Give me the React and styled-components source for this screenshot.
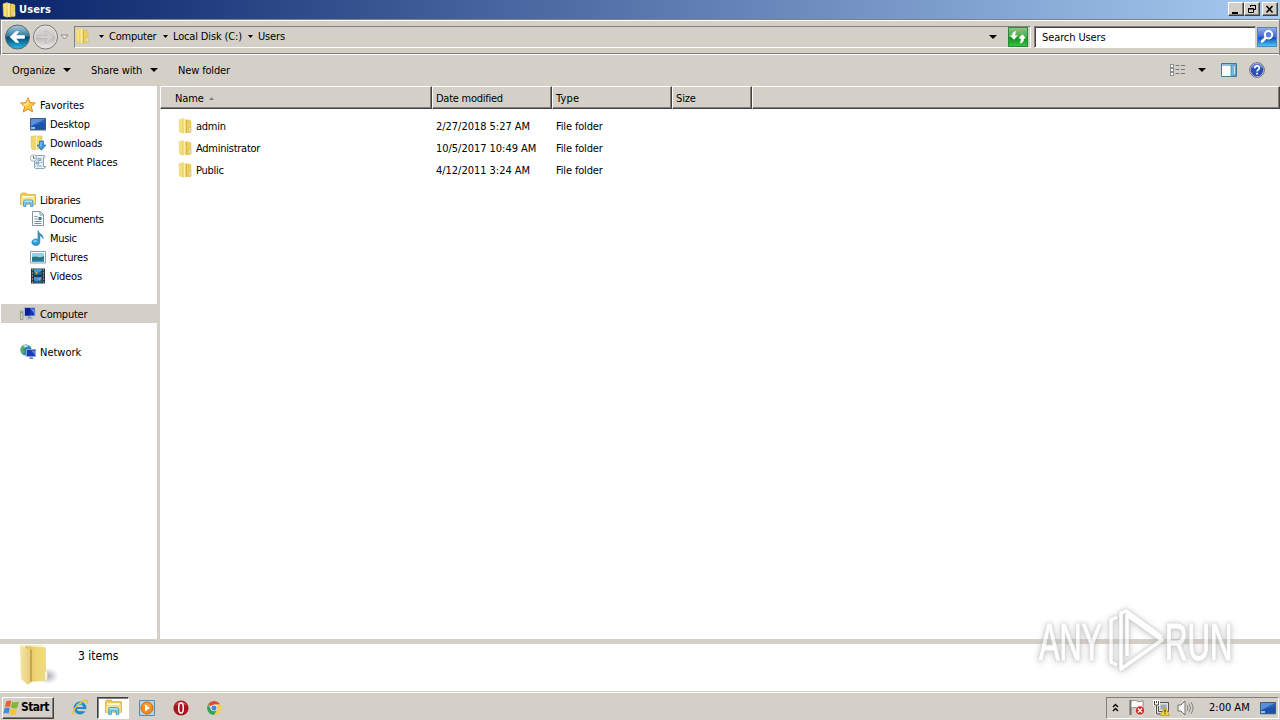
import React from "react";
import styled, { createGlobalStyle, css } from "styled-components";

const face = "#d4d0c8";

const Global = createGlobalStyle`
  * { box-sizing: border-box; }
  html, body { margin: 0; padding: 0; overflow: hidden; }
  body {
    background: #fff;
    color: #000;
    font: 11px/13px "DejaVu Sans Condensed", "DejaVu Sans", sans-serif;
    font-stretch: condensed;
  }
  svg { display: block; flex: none; }
`;

const Screen = styled.div`
  position: relative;
  width: 1280px;
  height: 720px;
  display: flex;
  flex-direction: column;
  overflow: hidden;
`;

const Label = styled.span`
  white-space: pre;
  letter-spacing: ${(p) => p.$track ?? -0.15}px;
  font-weight: ${(p) => (p.$bold ? 700 : 400)};
`;

/* ---------- window frame ---------- */
const TitleBar = styled.header`
  display: flex;
  align-items: center;
  height: 19px;
  flex: none;
  padding: 0 2px 0 1px;
  color: #fff;
  background: linear-gradient(90deg, #0a246a, #a6caf0);
`;

const TitleText = styled(Label)`
  flex: 1;
  margin: -1px 0 0 2px;
`;

const WindowButton = styled.button`
  width: 16px;
  height: 14px;
  padding: 0;
  margin: -1px 0 0 ${(p) => (p.$gap ? 2 : 0)}px;
  display: flex;
  align-items: center;
  justify-content: center;
  background: ${face};
  border: 1px solid;
  border-color: #fff #404040 #404040 #fff;
  box-shadow: inset -1px -1px #808080;
`;

const NavBar = styled.nav`
  display: flex;
  align-items: center;
  height: 36px;
  flex: none;
  padding: 0 0 1px 3px;
  background: ${face};
  border: 1px solid #808080;
  border-bottom: 0;
  box-shadow: inset 1px 1px #fff, inset 0 -1px #fff, inset 0 -2px #808080;
`;

const NavGap = styled.div`
  flex: none;
  width: ${(p) => p.$w}px;
`;

const AddressField = styled.div`
  display: flex;
  align-items: center;
  width: 957px;
  height: 22px;
  margin-left: 5px;
  background: ${face};
  border: 1px solid;
  border-color: #808080 #fff #fff #808080;

  & > svg:first-child {
    margin: -2px 0 0 -1px;
  }
`;

const Crumb = styled.span`
  display: flex;
  align-items: center;
  width: ${(p) => p.$w}px;
  margin-left: ${(p) => p.$before ?? 0}px;
  padding-bottom: 1px;
  gap: 5px;
`;

const Spacer = styled.div`
  flex: 1;
`;

const SearchField = styled.div`
  width: 222px;
  height: 22px;
  margin: 0 1px 0 3px;
  padding: 4px 0 0 7px;
  background: #fff;
  border: 1px solid;
  border-color: #808080 #d4d0c8 #fff #808080;
  box-shadow: inset 1px 1px #404040;
`;

const CommandBar = styled.div`
  display: flex;
  align-items: center;
  height: 31px;
  flex: none;
  padding: 0 15px 1px 12px;
  background: ${face};
`;

const Command = styled.div`
  display: flex;
  align-items: center;
  gap: ${(p) => p.$gap ?? 8}px;
  width: ${(p) => p.$w}px;
`;

/* ---------- body ---------- */
const Body = styled.main`
  display: flex;
  height: 553px;
  flex: none;
`;

const Sidebar = styled.aside`
  width: 160px;
  flex: none;
  padding: 9px 0 0 1px;
  border-right: 3px solid ${face};
`;

const Branch = styled.section`
  margin-bottom: 19px;
`;

const NavItem = styled.div`
  display: flex;
  align-items: center;
  gap: 4px;
  height: 19px;
  padding-left: ${(p) => (p.$child ? 29 : 19)}px;
  background: ${(p) => (p.$active ? face : "transparent")};

  & > span {
    padding-top: 2px;
  }
`;

const Listing = styled.section`
  flex: 1;
`;

const HeaderRow = styled.div`
  display: flex;
  height: 23px;
  background: ${face};
`;

const HeaderCell = styled.div`
  display: flex;
  align-items: center;
  gap: 5px;
  width: ${(p) => p.$w}px;
  padding: 1px 0 0 ${(p) => p.$pad ?? 3}px;
  border: 1px solid;
  border-color: #fff #404040 #404040 #fff;
  box-shadow: inset -1px -1px #808080;
`;

const Rows = styled.div`
  padding: 6px 0 0 17px;
`;

const FileRow = styled.div`
  display: flex;
  align-items: center;
  height: 22px;
`;

const FileCell = styled.div`
  display: flex;
  align-items: center;
  gap: 3px;
  width: ${(p) => p.$w}px;

  & > svg {
    margin-top: -1px;
  }
`;

/* ---------- bottom ---------- */
const DetailsPane = styled.footer`
  display: flex;
  height: 53px;
  flex: none;
  gap: 20px;
  padding-left: 18px;
  border-top: 5px solid ${face};
  border-bottom: 1px solid ${face};
  font-size: 12px;
  line-height: 24px;

  & > svg {
    margin-top: -1px;
  }
`;

const TaskBar = styled.div`
  display: flex;
  align-items: center;
  height: 28px;
  flex: none;
  padding: 2px 1px 0 2px;
  background: ${face};
  border-top: 1px solid #fff;
`;

const raised = css`
  border-color: #fff #404040 #404040 #fff;
  box-shadow: inset -1px -1px #808080;
`;

const pressed = css`
  border-color: #404040 #fff #fff #404040;
  box-shadow: inset 1px 1px #808080;
  background: #fff;
`;

const StartButton = styled.div`
  display: flex;
  align-items: center;
  gap: 1px;
  width: 52px;
  height: 22px;
  padding-left: 0;
  margin-right: 10px;
  border: 1px solid;
  font-size: 12px;
  ${raised}
`;

const TaskButton = styled.div`
  display: flex;
  align-items: center;
  justify-content: center;
  width: 32px;
  height: 22px;
  margin-right: ${(p) => p.$after ?? 1}px;
  border: 1px solid transparent;
  ${(p) => p.$active && pressed}
`;

const Tray = styled.div`
  display: flex;
  align-items: center;
  width: 173px;
  height: 22px;
  padding-left: 5px;
  border: 1px solid;
  border-color: #808080 #fff #fff #808080;
`;

const TrayItem = styled.div`
  width: ${(p) => p.$w}px;
  flex: none;
`;

const Watermark = styled.div`
  position: absolute;
  left: 1030px;
  top: 602px;
  opacity: 0.72;

  svg {
    overflow: visible;
  }
`;

const WatermarkShapes = styled.g`
  filter: drop-shadow(0 0 1.5px #b4b4b4) drop-shadow(0 1px 3px #b4b4b4);
`;

/* ---------- drawings ---------- */
const Arrow = ({ w = 5, fill = "#000", up }) => (
  <svg width={w} height={Math.ceil(w / 2)} viewBox="0 0 10 5" preserveAspectRatio="none">
    <path d={up ? "M0 5h10L5 0z" : "M0 0h10L5 5z"} fill={fill} />
  </svg>
);

const Folder = ({ size = 16 }) => (
  <svg width={size} height={size} viewBox="0 0 16 16">
    <path d="M2 1.8 6.5.5v14.7L2.5 14z" fill="#f5e07e" stroke="#e3cb6b" strokeWidth=".5" />
    <path d="M7.5 2h4.8l1.7 1v11.2L8 15z" fill="#edcf5c" stroke="#d9b94d" strokeWidth=".5" />
    <path d="M6 1.8 9 .8v13.7l-2.5.7z" fill="#fbefa0" />
    <path d="M6 2v13" stroke="#dcba50" strokeWidth=".6" />
    <path d="M9.2 1.5v13" stroke="#c69d2c" strokeWidth=".8" />
    <path d="M12 9.5h2v4.5h-2z" fill="#f3e8ae" stroke="#bcae70" strokeWidth=".4" />
  </svg>
);

const BigFolder = () => (
  <svg width="40" height="46" viewBox="0 0 40 46">
    <defs>
      <linearGradient id="flap">
        <stop stopColor="#f5e5a0" />
        <stop offset="1" stopColor="#e8cf80" />
      </linearGradient>
      <linearGradient id="back">
        <stop stopColor="#e0bb5c" />
        <stop offset=".5" stopColor="#efd374" />
        <stop offset="1" stopColor="#f0dc80" />
      </linearGradient>
      <radialGradient id="shade">
        <stop stopColor="#7f8a92" stopOpacity=".7" />
        <stop offset="1" stopColor="#8d949c" stopOpacity="0" />
      </radialGradient>
    </defs>
    <ellipse cx="30" cy="33" rx="10" ry="8" fill="url(#shade)" />
    <path d="m7 3 20 1 1 2v30l-2 2-14 1z" fill="url(#back)" />
    <path d="m2 2 10 5v33l-2 2-7-6z" fill="url(#flap)" />
    <path d="m12 7 2-1v32l-2 2z" fill="#c9a54b" />
    <path d="m26.5 27 3 2v7l-3 2z" fill="#fff6d8" stroke="#cfc08a" strokeWidth=".5" />
    <path d="M3 2.5h22" stroke="#faeec0" />
  </svg>
);

const BackIcon = () => (
  <svg width="27" height="26" viewBox="0 0 26 26">
    <defs>
      <linearGradient id="backblue" x2="0" y2="1">
        <stop stopColor="#a9cbd9" />
        <stop offset=".45" stopColor="#367e9f" />
        <stop offset=".52" stopColor="#064a75" />
        <stop offset="1" stopColor="#27bdee" />
      </linearGradient>
    </defs>
    <circle cx="13" cy="13" r="12" fill="url(#backblue)" stroke="#56666e" />
    <path d="M5.5 13 11.500 7.500h2.700L11.500 11.600H20v2.800h-8.500l2.700 4.100h-2.700z" fill="#fff" stroke="#fff" strokeWidth=".6" />
  </svg>
);

const ForwardIcon = () => (
  <svg width="27" height="26" viewBox="0 0 27 26">
    <defs>
      <linearGradient id="fwd" x2="0" y2="1">
        <stop stopColor="#dedcd9" />
        <stop offset=".5" stopColor="#cbc9c6" />
        <stop offset=".55" stopColor="#bebcba" />
        <stop offset="1" stopColor="#efeeec" />
      </linearGradient>
    </defs>
    <circle cx="13.5" cy="13" r="12" fill="url(#fwd)" stroke="#77777a" />
    <circle cx="13.5" cy="13" r="10.8" fill="none" stroke="#e6e4e1" />
    <path d="m21 13-6-6h-3l3.6 4.5H6v3h9.6L12 19h3z" fill="#d3d1ce" stroke="#b3b1ae" strokeWidth=".6" />
  </svg>
);

const RefreshIcon = () => (
  <svg width="20" height="20" viewBox="0 0 20 20">
    <defs>
      <linearGradient id="green" x2="0" y2="1">
        <stop stopColor="#8cc98a" />
        <stop offset=".48" stopColor="#4ba94b" />
        <stop offset=".54" stopColor="#128e22" />
        <stop offset="1" stopColor="#3bc63b" />
      </linearGradient>
    </defs>
    <rect x=".5" y=".5" width="19" height="19" fill="url(#green)" stroke="#2a8a37" />
    <path d="M8.5 4C5 4.500 4 6.200 4.200 8.500H1.800l4.200 4.300L9.800 8.500H7.400C7 6.800 7.500 5.300 8.500 4zM11.500 16.500c3.500-.5 4.700-2.500 4.400-5h2.300L14.300 7.200 10.400 11.500h2.300c.3 2-.1 3.700-1.200 5z" fill="#fff" />
  </svg>
);

const SearchIcon = () => (
  <svg width="20" height="20" viewBox="0 0 20 20">
    <defs>
      <linearGradient id="srch" x2="0" y2="1">
        <stop stopColor="#9aaff0" />
        <stop offset=".48" stopColor="#4468d6" />
        <stop offset=".55" stopColor="#164bc0" />
        <stop offset="1" stopColor="#4ad0f6" />
      </linearGradient>
    </defs>
    <rect x=".5" y=".5" width="19" height="19" fill="url(#srch)" stroke="#5383c7" />
    <circle cx="11.5" cy="7.8" r="3.7" fill="#5c7fe0" stroke="#fff" strokeWidth="2" />
    <path d="m8.5 11-3.5 3.5" stroke="#fff" strokeWidth="2.5" strokeLinecap="round" />
  </svg>
);

const ViewIcon = () => (
  <svg width="16" height="14" viewBox="0 0 16 14">
    {[1.5, 5.5, 9.5].map((y) => (
      <g key={y} fill="none">
        <rect x=".5" y={y} width="3" height="3" fill="#fff" stroke="#8a8d92" />
        <path d={`M5.5 ${y + 1}h4M11 ${y + 1}h4`} stroke="#74777f" />
      </g>
    ))}
  </svg>
);

const PreviewIcon = () => (
  <svg width="16" height="14" viewBox="0 0 16 14">
    <path d="M.5.5h15v13H.5z" fill="#fff" stroke="#45799a" />
    <path d="M1 1h14v2H1z" fill="#94c0d8" />
    <path d="M10 2h5v11h-5z" fill="#72bad9" stroke="#3c7d9d" strokeWidth=".7" />
    <path d="M13 3h1v8h-1z" fill="#c3e9f5" />
  </svg>
);

const HelpIcon = () => (
  <svg width="16" height="16" viewBox="0 0 16 16">
    <circle cx="8" cy="8" r="7.4" fill="#c4cbe0" stroke="#6d7384" />
    <circle cx="8" cy="8" r="6.3" fill="#2b4fb4" />
    <path d="M2.5 6a5.8 5.8 0 0 1 11 0c-2-1-7-1-11 0" fill="#6484d2" />
    <path d="M5.8 6.3C5.8 3 10.5 3.3 10.3 6c0 1.8-2.2 1.6-2.2 3.5M8.1 10.8v1.7" stroke="#fff" strokeWidth="1.7" fill="none" />
  </svg>
);

const Star = () => (
  <svg width="16" height="16" viewBox="0 0 16 16">
    <path d="m8 .8 2.1 4.8 5.2.5-4 3.4 1.3 5.4L8 12.2 3.3 15l1.3-5.5-4-3.4 5.3-.5z" fill="#ffc942" stroke="#e68a24" />
    <path d="M8 2.6 6.5 6.4l-3.8.5 3 2.3L8 7z" fill="#ffeb9a" />
  </svg>
);

const Desktop = () => (
  <svg width="16" height="14" viewBox="0 0 16 14">
    <path d="M.5 1.5h15v11H.5z" fill="#2863c0" stroke="#41597e" />
    <path d="M1 2h14L1 9z" fill="#5b8fd9" />
    <path d="M1 10q7-4 14-4v6H1z" fill="#1b53ab" />
    <path d="M1 10h4v2H1z" fill="#8bc7f3" />
    <path d="M0 13.5h16" stroke="#a3b9c9" />
  </svg>
);

const Downloads = () => (
  <svg width="16" height="16" viewBox="0 0 16 16">
    <path d="M1 1.5 6 .7v14.2L1.5 14zM7 1h5v13H7z" fill="#f0d772" stroke="#d9bd5b" strokeWidth=".6" />
    <path d="M6.5 1.5v13" stroke="#fff5b5" strokeWidth="1.5" />
    <path d="M9.5 6h4v4H16l-4.5 5.3L7 10h2.5z" fill="#3c96d9" stroke="#2270b4" strokeWidth=".7" />
    <path d="M10.5 7h1v5l-2-2h1z" fill="#91d1f3" />
  </svg>
);

const Recent = () => (
  <svg width="16" height="16" viewBox="0 0 16 16">
    <path d="M5 1.5h9.5q1 1 0 2h-1v9h2q0 2-2 2h-8q-2-1 0-2h-1v-9h2" fill="#e7f0f5" stroke="#758e9f" strokeWidth=".8" />
    <path d="M8 4.5h3v2H8zM6 8h3v2H6zM10.5 8.5h2M7 12h5" fill="#b6d4e4" stroke="#7498ae" strokeWidth=".8" />
    <circle cx="3.5" cy="4" r="3.2" fill="#f4f7f8" stroke="#96a3ab" strokeWidth=".8" />
    <path d="M3.5 2v2.3h2" fill="none" stroke="#4a5c68" strokeWidth=".8" />
  </svg>
);

const Libraries = ({ size = 16 }) => (
  <svg width={size} height={size} viewBox="0 0 16 16">
    <path d="M.5 2.5 1.5 1h4.5l1 1.500H15.500V12.500H.5z" fill="#f0ca51" stroke="#cfaa42" strokeWidth=".7" />
    <path d="M2 4h12v2H2z" fill="#fffce3" />
    <path d="M1 5.5h14v7H1z" fill="#f7df84" />
    <path d="M3.5 14.500V10q0-2 2-2h5.500q2 0 2 2v4.500H10.500v-3.200H6v3.200z" fill="#79c9e9" stroke="#4795bd" strokeWidth=".8" />
    <path d="M4.5 9.200h7.500" stroke="#c7effa" />
  </svg>
);

const Documents = () => (
  <svg width="16" height="16" viewBox="0 0 16 16">
    <path d="M2.5.5h8l3 3v11h-11z" fill="#fafcfe" stroke="#8495a4" />
    <path d="M10 1v3h3.5" fill="#d8e3eb" stroke="#8495a4" />
    <path d="M4.5 5.5h3M4.5 8h3M4.5 10.5h7M4.5 12.5h7" stroke="#798c9c" />
    <path d="M8.5 6h3v3h-3z" fill="#3873a6" />
  </svg>
);

const Music = () => (
  <svg width="16" height="16" viewBox="0 0 16 16">
    <path d="M8 .5c.5 3.5 5.5 3.5 5 8-.6-2-2-2.600-3.200-2.700V12A4 3.300 0 1 1 8 9.500z" fill="#2997d6" stroke="#2077b5" strokeWidth=".6" />
    <ellipse cx="5.2" cy="11.3" rx="2" ry="1.3" fill="#75cdf2" />
  </svg>
);

const Pictures = () => (
  <svg width="16" height="14" viewBox="0 0 16 14">
    <path d="M.5 1.5h15v11.500H.5z" fill="#fff" stroke="#8a9fae" />
    <path d="M2 3h12v8.500H2z" fill="#8dd4ef" />
    <path d="M2 7q4-1 6 0 3 1 6-1v5.500H2z" fill="#26766b" />
    <path d="M2 9.500q5 1 12-1v3H2z" fill="#237ba7" />
  </svg>
);

const Videos = () => (
  <svg width="16" height="16" viewBox="0 0 16 16">
    <path d="M1 .5h14v15H1z" fill="#28353c" />
    <path d="M4 1h8v6H4zM4 9h8v6H4z" fill="#3b98cf" />
    <path d="M4 4q4 3 8-2v5H4zM4 12q4 3 8-2v5H4z" fill="#225e88" />
    <path d="m5 3 3 2-2 2zM8 11l3-1-1 3z" fill="#df9a50" />
    {[1, 4, 7, 10, 13].map((y) => (
      <path key={y} d={`M2 ${y + 0.5}h1v1H2zM13 ${y + 0.5}h1v1h-1z`} fill="#d9e3e7" />
    ))}
  </svg>
);

const Computer = () => (
  <svg width="16" height="16" viewBox="0 0 16 16">
    <path d="M.5 5h2.5v8.500H.5z" fill="#c6cac0" stroke="#83907d" strokeWidth=".7" />
    <path d="M1 6.500h1.500" stroke="#6ea568" />
    <path d="M4.500 1.500h10.500v8.500H4.500z" fill="#1932bb" stroke="#a9b8d2" />
    <path d="M5 2h5v7.500H5z" fill="#0b208f" />
    <path d="m10 2 4.500 1v5z" fill="#6388e3" />
    <path d="M8 10.500h3l1 2H7z" fill="#7e91ae" />
    <path d="M6 13h7" stroke="#a9b6c8" />
  </svg>
);

const Network = () => (
  <svg width="16" height="16" viewBox="0 0 16 16">
    <circle cx="6" cy="6" r="5.6" fill="#2c86b4" />
    <path d="M1 4q2-4 6-3.200L5 4 3 5l2 3-2 2Q0 7 1 4z" fill="#5fae4c" />
    <path d="M3 2Q6 0 9 2L5 3.500z" fill="#bde4ec" />
    <path d="M6.500 5.500h9v7h-9z" fill="#1739bb" stroke="#8ba4cf" />
    <path d="m11 6 4 1v4z" fill="#6287de" />
    <path d="M10 13h2.500l1 2H9z" fill="#7690ad" />
  </svg>
);

const WindowsLogo = () => (
  <svg width="17" height="16" viewBox="0 0 17 16">
    <path d="M3.2 1.400Q6-.5 8.300 1.200L7 7.300Q4.700 5.900 1.900 7.300z" fill="#e66537" />
    <path d="M9.2 1.700Q12 3 15.800 1.500L14.300 7.800Q11 9 7.900 7.700z" fill="#80b83b" />
    <path d="M1.700 8.200Q4.500 7 6.800 8.300l-1.300 5.500Q3.200 12.300.2 13.700z" fill="#438bd2" />
    <path d="M7.600 8.700q2.800 1.200 6.500.2l-1.500 5.500Q9 15.500 6.300 14.300z" fill="#f4c33a" />
  </svg>
);

const IE = () => (
  <svg width="17" height="17" viewBox="0 0 17 17">
    <circle cx="8" cy="9" r="4.8" fill="none" stroke="#238acb" strokeWidth="3.2" />
    <path d="M4 9h9.500" stroke="#238acb" strokeWidth="2" />
    <path d="M9.500 10.200h6v2h-6z" fill={face} />
    <path d="M2 15.500C-.8 13 5 5.500 10 2.600c5-3 6.500-1 4.400 2.100" fill="none" stroke="#edbd2d" strokeWidth="1.5" />
    <path d="M4.500 6Q7 3.700 10 5" stroke="#9ad7ef" fill="none" />
  </svg>
);

const MediaPlayer = () => (
  <svg width="16" height="16" viewBox="0 0 16 16">
    <path d="M.5.5h15v15H.5z" fill="#b5d5ea" stroke="#568bb4" />
    <circle cx="8" cy="8" r="6" fill="#f58b1e" stroke="#ce6d0f" />
    <path d="M3.500 6a5 5 0 0 1 9 0z" fill="#fba545" />
    <path d="m6 4.500 5 3.500-5 3.500z" fill="#fff" />
  </svg>
);

const Opera = () => (
  <svg width="16" height="16" viewBox="0 0 16 16">
    <circle cx="8" cy="8" r="7.6" fill="#a81520" />
    <path d="M2 5Q8-2 14 5q-6-2-12 0" fill="#d0625f" />
    <ellipse cx="8" cy="8" rx="2.3" ry="5" fill="#a01420" stroke="#fff" strokeWidth="1.5" />
  </svg>
);

const Chrome = () => (
  <svg width="14" height="14" viewBox="0 0 16 16">
    <path d="M8 8 1.200 4A8 8 0 0 1 15 4H8z" fill="#dd4b3c" />
    <path d="M8 8V4h7A8 8 0 0 1 8 16l3.500-6z" fill="#f8cf45" />
    <path d="M8 8 11.500 10 8 16A8 8 0 0 1 1.200 4l3.400 6z" fill="#31a15b" />
    <circle cx="8" cy="8" r="3.8" fill="#f4f4f4" />
    <circle cx="8" cy="8" r="2.9" fill="#4585dc" />
  </svg>
);

const Flag = () => (
  <svg width="18" height="17" viewBox="0 0 18 17">
    <path d="M2.500 1v15" stroke="#6d6d6d" strokeWidth="2" />
    <path d="M3 2q4-1.500 6 0 3 2 6-.5V9q-4 2-6 0Q6 8 3 9z" fill="#fff" stroke="#777" strokeWidth=".8" />
    <circle cx="12" cy="11.500" r="4.600" fill="#d22c27" stroke="#fff" strokeWidth=".6" />
    <path d="m10 9.500 4 4m0-4-4 4" stroke="#fff" strokeWidth="1.400" />
  </svg>
);

const NetStatus = () => (
  <svg width="17" height="16" viewBox="0 0 17 16">
    <path d="M5.500 2.500h10v9h-10z" fill="#d5d8da" stroke="#555" />
    <path d="M7 4h7v6H7z" fill="#a4abb0" stroke="#f3f3f3" strokeWidth=".6" />
    <path d="M1 .5h5v4.500H1zM3.500 4v11" fill="#fff" stroke="#fff" strokeWidth="2" />
    <path d="M1.500 1v4h4V1M3.500 1v2M3.500 5v9h4" fill="none" stroke="#4a4a4a" />
    <path d="m12 7 4.500 8.500h-9z" fill="#f6da39" stroke="#b99413" strokeWidth=".7" />
    <path d="M12 9.500v3M12 13.200v1" stroke="#222" strokeWidth="1.1" />
  </svg>
);

const Speaker = () => (
  <svg width="17" height="16" viewBox="0 0 17 16">
    <path d="M1 5h3l4-4v14l-4-4H1z" fill="#f5f5f5" stroke="#727272" />
    <path d="M10 5q2 3 0 6M12 3.500q3 4.500 0 9M14 2q4 6 0 12" fill="none" stroke="#858585" />
  </svg>
);

const Chevrons = () => (
  <svg width="7" height="9" viewBox="0 0 7 9">
    <path d="m1 4 2.500-2.500L6 4M1 8l2.500-2.500L6 8" fill="none" stroke="#000" strokeWidth="1.4" />
  </svg>
);

const Brand = () => (
  <svg width="220" height="80" viewBox="0 0 220 80">
    <WatermarkShapes
      fill="#fff"
      stroke="#fff"
      strokeWidth="1.2"
      fontFamily="Liberation Sans, sans-serif"
      fontSize="52"
    >
      <text transform="translate(9 58) scale(.59 1)">ANY</text>
      <text transform="translate(135 58) scale(.6 1)">RUN</text>
      <path
        d="M87 15 81 18v42l6 3M97 54V13l35 25-41 29V11l5-2 36 26"
        fill="none"
        strokeWidth="3.5"
        strokeLinejoin="round"
      />
    </WatermarkShapes>
  </svg>
);

/* ---------- content ---------- */
const branches = [
  [
    ["Favorites", Star, -0.05],
    ["Desktop", Desktop],
    ["Downloads", Downloads, -0.25],
    ["Recent Places", Recent, -0.1],
  ],
  [
    ["Libraries", Libraries, -0.25],
    ["Documents", Documents, -0.3],
    ["Music", Music, -0.3],
    ["Pictures", Pictures],
    ["Videos", Videos],
  ],
  [["Computer", Computer, -0.25]],
  [["Network", Network, 0]],
];

const files = [
  ["admin", "2/27/2018 5:27 AM"],
  ["Administrator", "10/5/2017 10:49 AM"],
  ["Public", "4/12/2011 3:24 AM"],
];

export default function App() {
  return (
    <Screen>
      <Global />
      <TitleBar>
        <Folder />
        <TitleText $bold $track={0.1}>Users</TitleText>
        <WindowButton aria-label="Minimize">
          <svg width="10" height="9"><path d="M1 7h6v2H1z" /></svg>
        </WindowButton>
        <WindowButton aria-label="Restore">
          <svg width="10" height="10" fill="none" stroke="#000">
            <path d="M3.500 3V1.500h5v4H7M3 1.500h6M1.500 4.500h5v4h-5zM1 5h6" />
          </svg>
        </WindowButton>
        <WindowButton $gap aria-label="Close">
          <svg width="10" height="9"><path d="m1.500 1 6 6.500m0-6.500-6 6.500" stroke="#000" strokeWidth="1.6" /></svg>
        </WindowButton>
      </TitleBar>

      <NavBar>
        <BackIcon />
        <NavGap $w={1} />
        <ForwardIcon />
        <NavGap $w={1} />
        <svg width="9" height="6" viewBox="0 0 9 6"><path d="M1 1h7L4.500 5z" fill="#eee" stroke="#777" strokeWidth=".8" /></svg>
        <AddressField>
          <Folder />
          <Crumb $w={64} $before={9}><Arrow /><Label $track={-0.22}>Computer</Label></Crumb>
          <Crumb $w={85}><Arrow /><Label>Local Disk (C:)</Label></Crumb>
          <Crumb $w={60}><Arrow /><Label>Users</Label></Crumb>
          <Spacer />
          <Arrow w={8} />
          <NavGap $w={11} />
          <RefreshIcon />
          <NavGap $w={2} />
        </AddressField>
        <SearchField><Label $track={-0.1}>Search Users</Label></SearchField>
        <SearchIcon />
      </NavBar>

      <CommandBar>
        <Command $w={79}><Label>Organize</Label><Arrow w={8} /></Command>
        <Command $w={87}><Label>Share with</Label><Arrow w={8} /></Command>
        <Label>New folder</Label>
        <Spacer />
        <Command $gap={12} $w={51}><ViewIcon /><Arrow w={8} /></Command>
        <Command $gap={12}><PreviewIcon /><HelpIcon /></Command>
      </CommandBar>

      <Body>
        <Sidebar>
          {branches.map((items) => (
            <Branch key={items[0][0]}>
              {items.map(([name, Icon, track], i) => (
                <NavItem key={name} $child={i > 0} $active={name === "Computer"}>
                  <Icon />
                  <Label $track={track}>{name}</Label>
                </NavItem>
              ))}
            </Branch>
          ))}
        </Sidebar>
        <Listing>
          <HeaderRow>
            <HeaderCell $w={272} $pad={14}><Label>Name</Label><Arrow w={5} up fill="#808080" /></HeaderCell>
            <HeaderCell $w={120}><Label $track={-0.25}>Date modified</Label></HeaderCell>
            <HeaderCell $w={120}><Label $track={0.2}>Type</Label></HeaderCell>
            <HeaderCell $w={80}><Label>Size</Label></HeaderCell>
            <HeaderCell $w={528} />
          </HeaderRow>
          <Rows>
            {files.map(([name, date]) => (
              <FileRow key={name}>
                <FileCell $w={259}><Folder /><Label $track={-0.25}>{name}</Label></FileCell>
                <FileCell $w={120}><Label $track={-0.03}>{date}</Label></FileCell>
                <FileCell $w={100}><Label>File folder</Label></FileCell>
              </FileRow>
            ))}
          </Rows>
        </Listing>
      </Body>

      <DetailsPane>
        <BigFolder />
        <Label $track={0}>3 items</Label>
      </DetailsPane>

      <TaskBar>
        <StartButton><WindowsLogo /><Label $bold $track={-0.55}>Start</Label></StartButton>
        <TaskButton><IE /></TaskButton>
        <TaskButton $active $after={2}><Libraries size={17} /></TaskButton>
        <TaskButton $after={2}><MediaPlayer /></TaskButton>
        <TaskButton $after={1}><Opera /></TaskButton>
        <TaskButton><Chrome /></TaskButton>
        <Spacer />
        <Tray>
          <TrayItem $w={16}><Chevrons /></TrayItem>
          <TrayItem $w={25}><Flag /></TrayItem>
          <TrayItem $w={24}><NetStatus /></TrayItem>
          <TrayItem $w={32}><Speaker /></TrayItem>
          <TrayItem $w={51}><Label $track={0}>2:00 AM</Label></TrayItem>
          <Desktop />
        </Tray>
      </TaskBar>

      <Watermark><Brand /></Watermark>
    </Screen>
  );
}
